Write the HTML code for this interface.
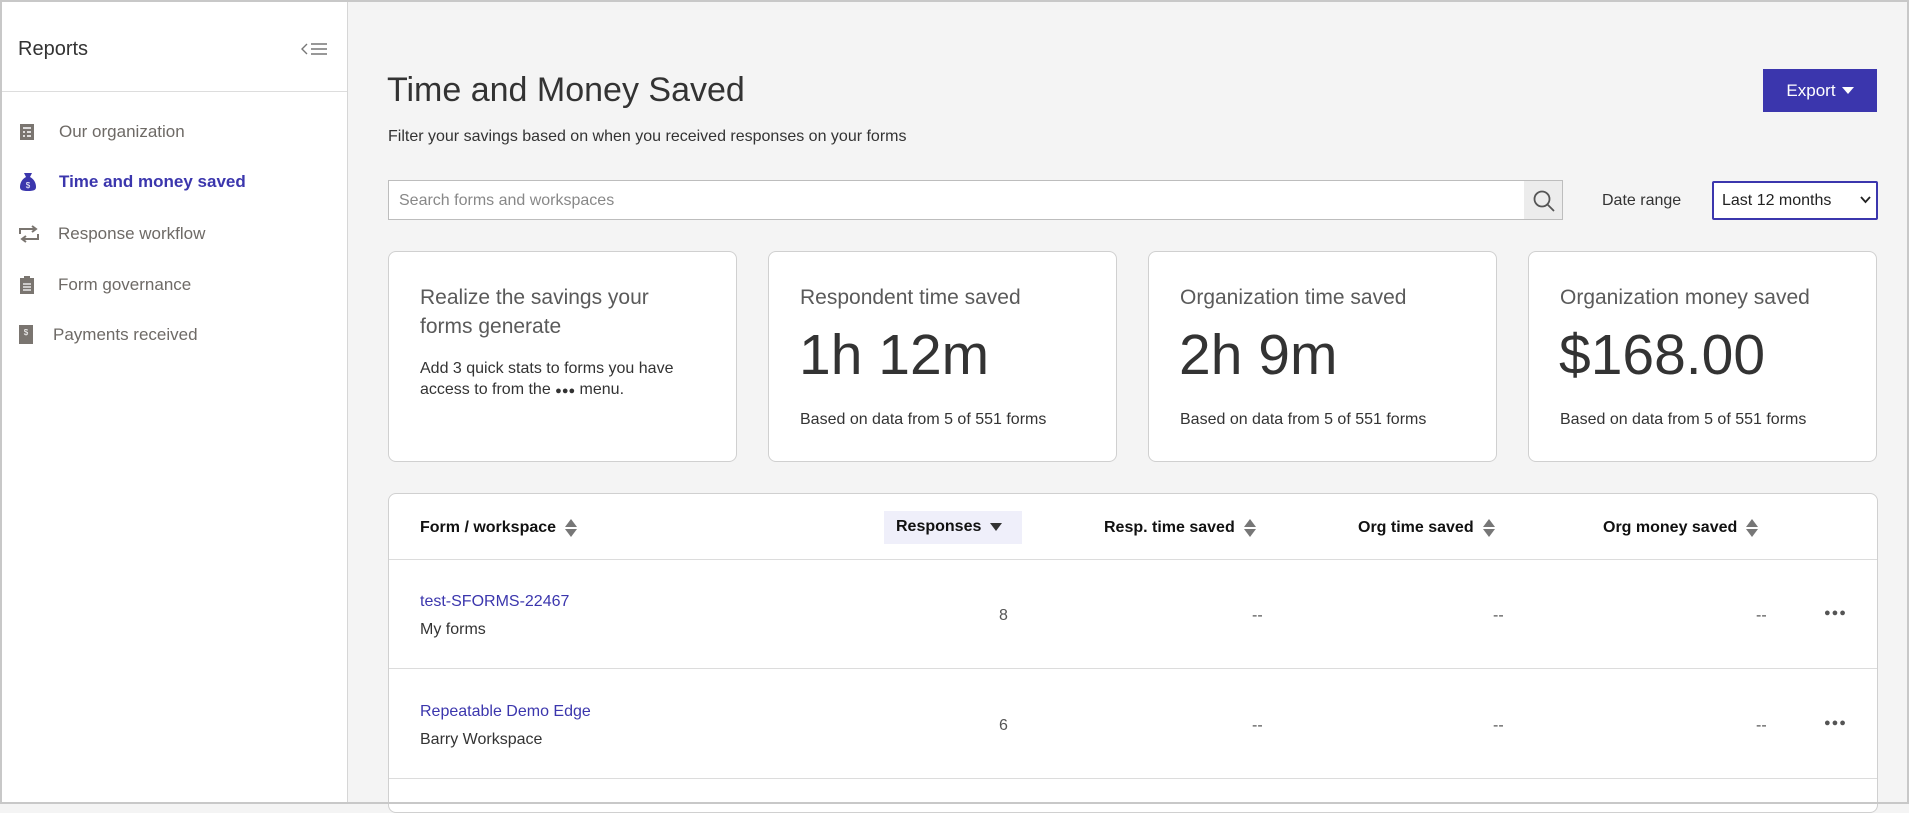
<!DOCTYPE html>
<html><head><meta charset="utf-8"><style>
*{box-sizing:border-box;margin:0;padding:0}
body{width:1909px;height:804px;overflow:hidden;font-family:"Liberation Sans",sans-serif;background:#f4f4f4;position:relative;color:#333}
.frame{position:absolute;inset:0;border:2px solid #c8c8c8;pointer-events:none;z-index:10}
.side{position:absolute;left:0;top:0;width:348px;height:804px;background:#fff;border-right:1px solid #d6d6d6}
.side h2{position:absolute;left:18px;top:38px;font-size:20px;font-weight:400;color:#333}
.side .hr{position:absolute;left:0;right:0;top:91px;border-top:1px solid #ddd}
.nav{position:absolute;left:0;font-size:17px;color:#6e6a66;display:flex;align-items:center}
.nav svg{position:absolute;left:19px}
.a{position:absolute;white-space:nowrap}
.btn{position:absolute;left:1763px;top:69px;width:114px;height:43px;background:#3b36ad;color:#fff;font-size:17px;display:flex;align-items:center;justify-content:center;gap:6px}
.card{position:absolute;top:251px;width:349px;height:211px;background:#fff;border:1px solid #d0d0d0;border-radius:8px}
.card .t{position:absolute;left:31px;top:31px;font-size:21px;color:#5a5a5a;line-height:29px}
.card .n{position:absolute;left:30px;top:70px;font-size:57px;color:#333}
.card .b{position:absolute;left:31px;top:159px;font-size:16px;color:#333}
.tbl{position:absolute;left:388px;top:493px;width:1490px;height:320px;background:#fff;border:1px solid #d0d0d0;border-radius:8px}
.hd{position:absolute;font-size:16px;font-weight:700;color:#111;top:24px;display:flex;align-items:center;gap:8px}
.line{position:absolute;left:0;right:0;border-top:1px solid #dcdcdc}
.cell{position:absolute;font-size:16px;color:#555}
.dots{position:absolute;font-size:11px;color:#555;letter-spacing:1px}
</style></head><body>
<div class="frame"></div>
<div class="side">
<h2>Reports</h2>
<svg style="position:absolute;left:300px;top:42px" width="28" height="14" viewBox="0 0 28 14"><path d="M7 2 2 7l5 5" fill="none" stroke="#777" stroke-width="1.4"/><path d="M11 2h16M11 7h16M11 12h16" stroke="#777" stroke-width="1.4"/></svg>
<div class="hr"></div>
<div class="nav" style="top:121px;height:22px"><svg width="16" height="18" viewBox="0 0 16 18"><rect x="1" y="1" width="14" height="16" fill="#7a7570"/><path d="M4 5h8M4 9h2M8 9h4M4 13h2M8 13h4" stroke="#fff" stroke-width="1.5"/></svg><span class="a" style="left:59px">Our organization</span></div>
<div class="nav" style="top:171px;height:22px"><svg width="18" height="20" viewBox="0 0 18 20"><path d="M5 1h8l-2 4c4 2 6 6 6 10 0 3-2 4-8 4S1 18 1 15c0-4 2-8 6-10z" fill="#3b36ad"/><text x="9" y="16" font-size="8" fill="#fff" text-anchor="middle" font-family="Liberation Sans">$</text></svg><span class="a" style="left:59px;color:#3b36ad;font-weight:700">Time and money saved</span></div>
<div class="nav" style="top:223px;height:22px"><svg width="20" height="18" viewBox="0 0 20 18"><path d="M1 9V4h15M13 1l4 3-4 3M19 9v5H4M7 11l-4 3 4 3" fill="none" stroke="#7a7570" stroke-width="2"/></svg><span class="a" style="left:58px">Response workflow</span></div>
<div class="nav" style="top:274px;height:22px"><svg width="16" height="20" viewBox="0 0 16 20"><rect x="1" y="3" width="14" height="16" fill="#7a7570"/><rect x="5" y="1" width="6" height="4" fill="#7a7570"/><path d="M4 9h8M4 12h8M4 15h8" stroke="#fff" stroke-width="1.3"/></svg><span class="a" style="left:58px">Form governance</span></div>
<div class="nav" style="top:324px;height:22px"><svg width="14" height="20" viewBox="0 0 14 20"><rect x="0" y="0" width="14" height="19" fill="#7a7570"/><text x="7" y="10" font-size="8" fill="#fff" text-anchor="middle" font-family="Liberation Sans">$</text></svg><span class="a" style="left:53px">Payments received</span></div>
</div>
<div class="a" style="left:387px;top:71px;font-size:34px;color:#333">Time and Money Saved</div>
<div class="a" style="left:388px;top:128px;font-size:16px;color:#333">Filter your savings based on when you received responses on your forms</div>
<div class="btn">Export <svg width="12" height="8" viewBox="0 0 12 8"><path d="M0 0h12L6 7z" fill="#fff"/></svg></div>
<div style="position:absolute;left:388px;top:180px;width:1175px;height:40px;background:#fff;border:1px solid #bdbdbd"></div>
<div class="a" style="left:399px;top:192px;font-size:16px;color:#888">Search forms and workspaces</div>
<div style="position:absolute;left:1524px;top:181px;width:38px;height:38px;background:#ececec"><svg style="position:absolute;left:8px;top:8px" width="24" height="24" viewBox="0 0 24 24"><circle cx="10" cy="10" r="7.5" fill="none" stroke="#555" stroke-width="1.8"/><path d="M15.5 15.5 22 22" stroke="#555" stroke-width="1.8"/></svg></div>
<div class="a" style="left:1602px;top:192px;font-size:16px;color:#333">Date range</div>
<div style="position:absolute;left:1712px;top:181px;width:166px;height:39px;background:#fff;border:2px solid #3b36ad;border-radius:2px"></div>
<div class="a" style="left:1722px;top:192px;font-size:16px;color:#222">Last 12 months</div>
<svg style="position:absolute;left:1860px;top:196px" width="11" height="8" viewBox="0 0 11 8"><path d="M1 1l4.5 5L10 1" fill="none" stroke="#222" stroke-width="1.8"/></svg>
<div class="card" style="left:388px"><div class="t">Realize the savings your<br>forms generate</div><div class="b" style="top:106px;line-height:21px">Add 3 quick stats to forms you have<br>access to from the <span style="font-size:11px">●●●</span> menu.</div></div>
<div class="card" style="left:768px"><div class="t">Respondent time saved</div><div class="n">1h 12m</div><div class="b">Based on data from 5 of 551 forms</div></div>
<div class="card" style="left:1148px"><div class="t">Organization time saved</div><div class="n">2h 9m</div><div class="b">Based on data from 5 of 551 forms</div></div>
<div class="card" style="left:1528px"><div class="t">Organization money saved</div><div class="n">$168.00</div><div class="b">Based on data from 5 of 551 forms</div></div>
<div class="tbl">
<div class="hd" style="left:31px">Form / workspace <svg width="14" height="20" viewBox="0 0 14 20"><path d="M7 1 13 9H1zM1 11h12l-6 8z" fill="#777"/></svg></div>
<div style="position:absolute;left:495px;top:17px;width:138px;height:33px;background:#efeffa"></div>
<div class="hd" style="left:507px">Responses <svg width="14" height="10" viewBox="0 0 14 10"><path d="M1 1h12L7 9z" fill="#333"/></svg></div>
<div class="hd" style="left:715px">Resp. time saved <svg width="14" height="20" viewBox="0 0 14 20"><path d="M7 1 13 9H1zM1 11h12l-6 8z" fill="#777"/></svg></div>
<div class="hd" style="left:969px">Org time saved <svg width="14" height="20" viewBox="0 0 14 20"><path d="M7 1 13 9H1zM1 11h12l-6 8z" fill="#777"/></svg></div>
<div class="hd" style="left:1214px">Org money saved <svg width="14" height="20" viewBox="0 0 14 20"><path d="M7 1 13 9H1zM1 11h12l-6 8z" fill="#777"/></svg></div>
<div class="line" style="top:65px"></div>
<div class="cell" style="left:31px;top:99px;color:#3b36ad">test-SFORMS-22467</div>
<div class="cell" style="left:31px;top:127px;color:#333">My forms</div>
<div class="cell" style="left:610px;top:113px">8</div>
<div class="cell" style="left:863px;top:113px">--</div>
<div class="cell" style="left:1104px;top:113px">--</div>
<div class="cell" style="left:1367px;top:113px">--</div>
<div class="dots" style="left:1435px;top:113px">●●●</div>
<div class="line" style="top:174px"></div>
<div class="cell" style="left:31px;top:209px;color:#3b36ad">Repeatable Demo Edge</div>
<div class="cell" style="left:31px;top:237px;color:#333">Barry Workspace</div>
<div class="cell" style="left:610px;top:223px">6</div>
<div class="cell" style="left:863px;top:223px">--</div>
<div class="cell" style="left:1104px;top:223px">--</div>
<div class="cell" style="left:1367px;top:223px">--</div>
<div class="dots" style="left:1435px;top:223px">●●●</div>
<div class="line" style="top:284px"></div>
</div>
</body></html>
